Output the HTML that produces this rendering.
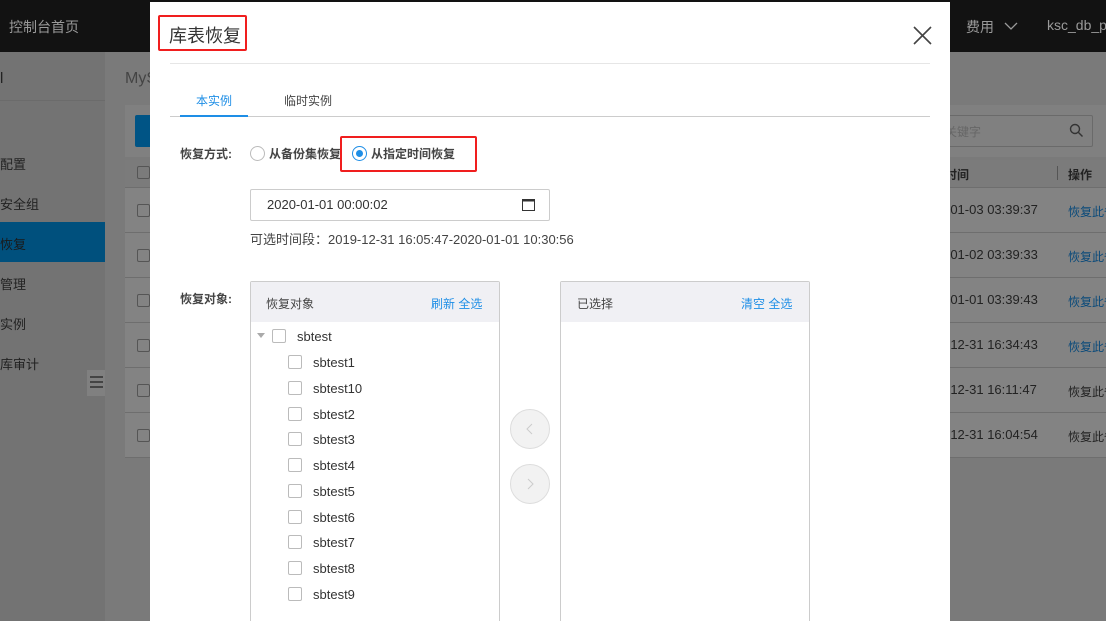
<!DOCTYPE html>
<html style="overflow:hidden;width:1106px;height:621px"><head><meta charset="utf-8"><style>
*{margin:0;padding:0;box-sizing:border-box}
body{width:1106px;height:621px;overflow:hidden;position:relative;background:#7a7a7a;font-family:"Liberation Sans","Noto Sans CJK SC",sans-serif;font-size:12px;color:#333}
.a{position:absolute;white-space:nowrap}
.top{left:0;top:0;width:1106px;height:52px;background:#121212}
.side{left:0;top:52px;width:105px;height:569px;background:#737373}
.cb{position:absolute;width:14px;height:14px;border:1px solid #bbb;border-radius:2px;background:#fff}
.bcb{position:absolute;width:13px;height:13px;border:1px solid #555;border-radius:2px}
.row{position:absolute;left:125px;width:981px;height:45px;border-top:1px solid #6e6e6e;background:#838383}
.t{font-size:13px;color:#222}
</style></head><body>
<div class="a top"></div>
<div class="a" style="left:9px;top:17px;font-size:14px;color:#9a9a9a">控制台首页</div>
<div class="a" style="left:966px;top:17px;font-size:14px;color:#9a9a9a">费用</div>
<svg class="a" style="left:1004px;top:22px" width="14" height="9"><path d="M1 1l6 6 6-6" stroke="#9a9a9a" fill="none" stroke-width="1.3"/></svg>
<div class="a" style="left:1047px;top:17px;font-size:14px;color:#9a9a9a">ksc_db_p</div>
<div class="a side"></div>
<div class="a" style="left:0;top:100px;width:105px;height:1px;background:#6b6b6b"></div>
<div class="a" style="left:0;top:70px;font-size:15px;color:#222">l</div>
<div class="a" style="left:0;top:222px;width:105px;height:40px;background:#00507d"></div>
<div class="a" style="left:0;top:154px;font-size:13px;color:#222">配置</div>
<div class="a" style="left:0;top:194px;font-size:13px;color:#222">安全组</div>
<div class="a" style="left:0;top:234px;font-size:13px;color:#1a1a1a">恢复</div>
<div class="a" style="left:0;top:274px;font-size:13px;color:#222">管理</div>
<div class="a" style="left:0;top:314px;font-size:13px;color:#222">实例</div>
<div class="a" style="left:0;top:354px;font-size:13px;color:#222">库审计</div>
<div class="a" style="left:87px;top:370px;width:18px;height:26px;background:#808080"></div>
<div class="a" style="left:90px;top:376px;width:13px;height:2px;background:#444"></div>
<div class="a" style="left:90px;top:381px;width:13px;height:2px;background:#444"></div>
<div class="a" style="left:90px;top:386px;width:13px;height:2px;background:#444"></div>
<div class="a" style="left:125px;top:70px;font-size:16px;color:#444">MyS</div>
<div class="a" style="left:125px;top:105px;width:981px;height:52px;background:#808080"></div>
<div class="a" style="left:135px;top:115px;width:20px;height:32px;background:#005485;border-radius:2px"></div>
<div class="a" style="left:930px;top:115px;width:163px;height:32px;border:1px solid #6a6a6a;border-radius:2px"></div>
<div class="a" style="left:945px;top:123px;font-size:12px;color:#666">关键字</div>
<svg class="a" style="left:1069px;top:123px" width="15" height="15"><circle cx="6" cy="6" r="4.5" stroke="#333" fill="none" stroke-width="1.4"/><path d="M9.5 9.5l4 4" stroke="#333" stroke-width="1.4"/></svg>
<div class="a" style="left:125px;top:160px;width:981px;height:27px;background:#7b7b7b"></div>
<div class="bcb" style="left:137px;top:166px"></div>
<div class="a" style="left:945px;top:166px;font-weight:bold;color:#222">时间</div>
<div class="a" style="left:1057px;top:166px;width:1px;height:14px;background:#555"></div>
<div class="a" style="left:1068px;top:166px;font-weight:bold;color:#222">操作</div>
<div class="row" style="top:187px"></div><div class="row" style="top:232px"></div><div class="row" style="top:277px"></div><div class="row" style="top:322px"></div><div class="row" style="top:367px"></div><div class="row" style="top:412px"></div>
<div class="a" style="left:125px;top:457px;width:981px;height:1px;background:#6e6e6e"></div>
<div class="bcb" style="left:137px;top:204px"></div><div class="bcb" style="left:137px;top:249px"></div><div class="bcb" style="left:137px;top:294px"></div><div class="bcb" style="left:137px;top:339px"></div><div class="bcb" style="left:137px;top:384px"></div><div class="bcb" style="left:137px;top:429px"></div>
<div class="a t" style="left:946px;top:202px">-01-03 03:39:37</div>
<div class="a t" style="left:946px;top:247px">-01-02 03:39:33</div>
<div class="a t" style="left:946px;top:292px">-01-01 03:39:43</div>
<div class="a t" style="left:946px;top:337px">-12-31 16:34:43</div>
<div class="a t" style="left:946px;top:382px">-12-31 16:11:47</div>
<div class="a t" style="left:946px;top:427px">-12-31 16:04:54</div>
<div class="a" style="left:1068px;top:203px;color:#0a4a7a">恢复此备</div>
<div class="a" style="left:1068px;top:248px;color:#0a4a7a">恢复此备</div>
<div class="a" style="left:1068px;top:293px;color:#0a4a7a">恢复此备</div>
<div class="a" style="left:1068px;top:338px;color:#0a4a7a">恢复此备</div>
<div class="a" style="left:1068px;top:383px;color:#222">恢复此备</div>
<div class="a" style="left:1068px;top:428px;color:#222">恢复此备</div>

<div class="a" style="left:150px;top:2px;width:800px;height:619px;background:#fff"></div>
<div class="a" style="left:158px;top:15px;width:89px;height:36px;border:2px solid #f01e1e;border-radius:2px"></div>
<div class="a" style="left:169px;top:22px;font-size:18px;color:#333">库表恢复</div>
<svg class="a" style="left:913px;top:26px" width="19" height="19"><path d="M1 1l17 17M18 1L1 18" stroke="#444" stroke-width="1.6"/></svg>
<div class="a" style="left:170px;top:63px;width:760px;height:1px;background:#e6e6e6"></div>
<div class="a" style="left:196px;top:92px;color:#1e8ee6">本实例</div>
<div class="a" style="left:284px;top:92px;color:#444">临时实例</div>
<div class="a" style="left:170px;top:116px;width:760px;height:1px;background:#ccc"></div>
<div class="a" style="left:180px;top:115px;width:68px;height:2px;background:#1e8ee6"></div>
<div class="a" style="left:180px;top:145px;font-weight:bold;color:#444">恢复方式:</div>
<div class="a" style="left:250px;top:146px;width:15px;height:15px;border:1px solid #bbb;border-radius:50%"></div>
<div class="a" style="left:269px;top:145px;font-weight:bold;color:#444">从备份集恢复</div>
<div class="a" style="left:340px;top:136px;width:137px;height:36px;border:2px solid #f01e1e;border-radius:2px"></div>
<div class="a" style="left:352px;top:146px;width:15px;height:15px;border:1px solid #1e8ee6;border-radius:50%"></div>
<div class="a" style="left:356px;top:150px;width:7px;height:7px;background:#1e8ee6;border-radius:50%"></div>
<div class="a" style="left:371px;top:145px;font-weight:bold;color:#444">从指定时间恢复</div>
<div class="a" style="left:250px;top:189px;width:300px;height:32px;border:1px solid #ccc;border-radius:2px"></div>
<div class="a" style="left:267px;top:197px;font-size:13px;color:#333">2020-01-01 00:00:02</div>
<svg class="a" style="left:522px;top:198px" width="13" height="13"><rect x="0.5" y="1.5" width="12" height="11" fill="none" stroke="#333"/><rect x="0.5" y="1.5" width="12" height="2" fill="#333"/></svg>
<div class="a" style="left:250px;top:229px;font-size:13px;color:#444">可选时间段：2019-12-31 16:05:47-2020-01-01 10:30:56</div>
<div class="a" style="left:180px;top:290px;font-weight:bold;color:#444">恢复对象:</div>
<div class="a" style="left:250px;top:281px;width:250px;height:340px;border:1px solid #ccc;border-bottom:none;border-radius:2px 2px 0 0"></div>
<div class="a" style="left:251px;top:282px;width:248px;height:40px;background:#f0f0f4"></div>
<div class="a" style="left:266px;top:295px;color:#444">恢复对象</div>
<div class="a" style="left:431px;top:295px;color:#1e8ee6">刷新 全选</div>
<svg class="a" style="left:257px;top:333px" width="9" height="6"><path d="M0 0h8l-4 5z" fill="#aaa"/></svg>
<div class="cb" style="left:272px;top:329px"></div>
<div class="a" style="left:297px;top:329px;font-size:13px">sbtest</div>
<div class="cb" style="left:288px;top:355px"></div><div class="a" style="left:313px;top:355px;font-size:13px">sbtest1</div>
<div class="cb" style="left:288px;top:381px"></div><div class="a" style="left:313px;top:381px;font-size:13px">sbtest10</div>
<div class="cb" style="left:288px;top:407px"></div><div class="a" style="left:313px;top:407px;font-size:13px">sbtest2</div>
<div class="cb" style="left:288px;top:432px"></div><div class="a" style="left:313px;top:432px;font-size:13px">sbtest3</div>
<div class="cb" style="left:288px;top:458px"></div><div class="a" style="left:313px;top:458px;font-size:13px">sbtest4</div>
<div class="cb" style="left:288px;top:484px"></div><div class="a" style="left:313px;top:484px;font-size:13px">sbtest5</div>
<div class="cb" style="left:288px;top:510px"></div><div class="a" style="left:313px;top:510px;font-size:13px">sbtest6</div>
<div class="cb" style="left:288px;top:535px"></div><div class="a" style="left:313px;top:535px;font-size:13px">sbtest7</div>
<div class="cb" style="left:288px;top:561px"></div><div class="a" style="left:313px;top:561px;font-size:13px">sbtest8</div>
<div class="cb" style="left:288px;top:587px"></div><div class="a" style="left:313px;top:587px;font-size:13px">sbtest9</div>
<div class="a" style="left:510px;top:409px;width:40px;height:40px;border:1px solid #ddd;border-radius:50%;background:#f2f2f2"></div>
<div class="a" style="left:510px;top:464px;width:40px;height:40px;border:1px solid #ddd;border-radius:50%;background:#f2f2f2"></div>
<svg class="a" style="left:526px;top:423px" width="8" height="12"><path d="M6 1L1 6l5 5" stroke="#ccc" fill="none"/></svg>
<svg class="a" style="left:527px;top:478px" width="8" height="12"><path d="M1 1l5 5-5 5" stroke="#ccc" fill="none"/></svg>
<div class="a" style="left:560px;top:281px;width:250px;height:340px;border:1px solid #ccc;border-bottom:none;border-radius:2px 2px 0 0"></div>
<div class="a" style="left:561px;top:282px;width:248px;height:40px;background:#f0f0f4"></div>
<div class="a" style="left:577px;top:295px;color:#444">已选择</div>
<div class="a" style="left:741px;top:295px;color:#1e8ee6">清空 全选</div>
</body></html>
